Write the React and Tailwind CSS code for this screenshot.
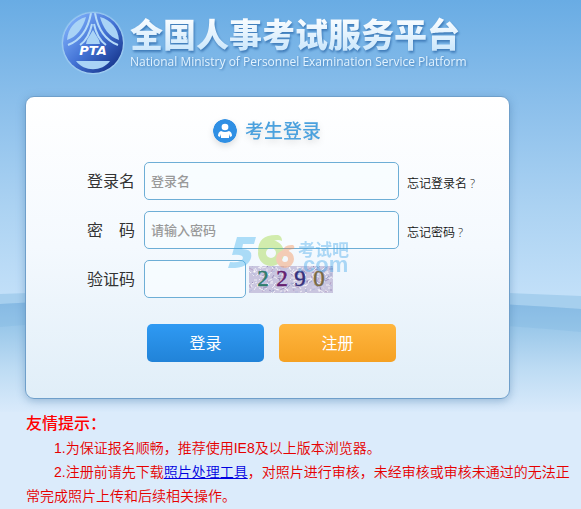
import { useState } from "react";

const Backdrop = () => (
  <svg
    className="absolute inset-x-0 top-0 -z-10 h-[412px] w-full"
    viewBox="0 0 581 412"
    preserveAspectRatio="none"
    aria-hidden="true"
  >
    <defs>
      <linearGradient id="sky" x1="0" y1="0" x2="0" y2="1">
        <stop offset="0" stopColor="#69ace4" />
        <stop offset="0.25" stopColor="#8bbfeb" />
        <stop offset="0.5" stopColor="#abd2f2" />
        <stop offset="0.71" stopColor="#c1dff8" />
        <stop offset="1" stopColor="#c1dff8" />
      </linearGradient>
      <linearGradient id="hill" gradientUnits="userSpaceOnUse" x1="0" y1="300" x2="0" y2="412">
        <stop offset="0" stopColor="#8abce5" />
        <stop offset="0.25" stopColor="#9bc8ea" />
        <stop offset="0.6" stopColor="#bcdbf3" />
        <stop offset="1" stopColor="#d9eafb" />
      </linearGradient>
    </defs>
    <rect width="581" height="412" fill="url(#sky)" />
    <path d="M0 294 Q290 282 581 296 V412 H0Z" fill="#a6cfee" />
    <path d="M0 304 Q270 288 581 309 V412 H0Z" fill="url(#hill)" />
    <path d="M0 327 Q260 303 581 332 V309 Q270 288 0 304Z" fill="#7fb5e1" opacity="0.3" />
  </svg>
);

const Logo = () => (
  <svg className="size-16 shrink-0" viewBox="0 0 64 64" role="img" aria-label="PTA">
    <defs>
      <linearGradient id="disc" x1="0" y1="0" x2="1" y2="1">
        <stop offset="0.1" stopColor="#7fb0fa" />
        <stop offset="0.5" stopColor="#4474d6" />
        <stop offset="0.9" stopColor="#16358c" />
      </linearGradient>
      <radialGradient id="halo">
        <stop offset="0.9" stopColor="#c3e3fb" />
        <stop offset="1" stopColor="#c3e3fb" stopOpacity="0" />
      </radialGradient>
      <clipPath id="rim">
        <circle cx="32" cy="32" r="30" />
      </clipPath>
    </defs>
    <circle cx="32" cy="32" r="32" fill="url(#halo)" />
    <circle cx="32" cy="32" r="30" fill="url(#disc)" />
    <g fill="#a9d3f6" clipPath="url(#rim)">
      {/* sky on both sides of the peak */}
      <path d="M25 6 C14 9 7 17 6 29 C16 26 22 17 25 6Z" />
      <path d="M39 6 C50 9 57 17 58 29 C48 26 42 17 39 6Z" />
      <path d="M32 19 L38 29 L39 33 H25 L26 29Z" />
      <path d="M15 50 H49 C41 61 23 61 15 50Z" />
    </g>
    <g fill="none" stroke="#b4daf8" strokeWidth="2" clipPath="url(#rim)">
      <path d="M30 2 C27 19 20 29 7 34 M34 2 C37 19 44 29 57 34" />
      <path d="M31 13 C29 23 26 29 19 34 M33 13 C35 23 38 29 45 34" />
    </g>
    <text
      x="32"
      y="44"
      textAnchor="middle"
      fill="#fff"
      fontFamily="DejaVu Sans, sans-serif"
      fontWeight="bold"
      fontStyle="italic"
      fontSize="13"
    >
      PTA
    </text>
  </svg>
);

const UserBadge = () => (
  <svg className="size-6 rounded-full drop-shadow-md" viewBox="0 0 24 24" aria-hidden="true">
    <circle cx="12" cy="12" r="12" fill="#2f8fe4" />
    <ellipse cx="12" cy="8" rx="3.4" ry="3.2" fill="#fff" />
    <path
      d="M8 12 Q12 14 16 12 Q19 13 19 17 L17 18 L16 15 V19 H8 V15 L7 18 L5 17 Q5 13 8 12Z"
      fill="#fff"
    />
  </svg>
);

const digits = [
  { char: "2", x: 14, color: "#2f7d6c" },
  { char: "2", x: 33, color: "#64206f" },
  { char: "9", x: 51, color: "#35307c" },
  { char: "0", x: 70, color: "#79693f" },
];

const tints = ["#ffffff", "#8d7fb0", "#aeb4dc", "#b195bd", "#dcd8ee", "#8f9cc4"];

// short strokes scattered over the captcha
const specks = Array.from({ length: 260 }, (_, i) => ({
  x: (i * 37 + ((i * i) % 11)) % 84,
  y: (i * 17 + ((i * i) % 7)) % 27,
  dx: ((i * 5) % 9) - 4,
  dy: ((i * 3) % 7) - 3,
  color: tints[(i * i + i) % 5 === 0 ? 0 : i % 6],
}));

const Captcha = () => (
  <svg className="h-[27px] w-[84px]" viewBox="0 0 84 27" role="img" aria-label="2290">
    <rect width="84" height="27" fill="#c9c5df" />
    {specks.map((s, i) => (
      <path key={i} d={`M${s.x} ${s.y}l${s.dx} ${s.dy}`} stroke={s.color} opacity="0.7" />
    ))}
    {digits.map((d) => (
      <text
        key={d.x}
        x={d.x}
        y="20"
        textAnchor="middle"
        fill={d.color}
        stroke={d.color}
        strokeWidth="0.5"
        fontFamily="Liberation Serif, serif"
        fontSize="23"
      >
        {d.char}
      </text>
    ))}
  </svg>
);

const Watermark = () => (
  <svg
    className="pointer-events-none absolute top-[134px] left-[202px] h-[48px] w-[134px] opacity-40"
    viewBox="0 0 134 48"
    aria-hidden="true"
  >
    <path
      d="M9 6 H28 L26 13 H15 L14 18 Q25 18 23 27 Q20 38 0 37 L2 31 Q14 32 15 27 Q15 23 4 24Z"
      fill="#3fb0ee"
    />
    <circle cx="43" cy="22" r="9" fill="none" stroke="#9bd534" strokeWidth="8" />
    <path d="M30 20 Q30 3 50 4 Q54 5 54 10 Q48 7 42 13Z" fill="#9bd534" />
    <circle cx="57" cy="28" r="6" fill="none" stroke="#f58a4b" strokeWidth="6" />
    <path d="M54 21 Q56 13 65 14 Q67 15 66 18 Q61 18 59 22Z" fill="#f58a4b" />
    <text x="70" y="25" fontSize="17" fontWeight="bold" fontFamily="Noto Sans CJK SC, sans-serif" fill="#3fa5ea">
      考试吧
    </text>
    <text x="69" y="41" fontSize="22" fontWeight="bold" fontFamily="Liberation Sans, sans-serif" fill="#3fa5ea">
      .com
    </text>
  </svg>
);

const inputStyle =
  "h-[38px] min-w-0 rounded-[5px] border border-[#6daed6] bg-[#f8fcff]/80 px-1.5 text-[13px] font-medium text-gray-700 placeholder:text-[#999] outline-none";

const Field = ({ id, label, children }) => (
  <div className="flex items-center">
    <label htmlFor={id} className="w-[57px] shrink-0 text-base whitespace-pre text-[#333]">
      {label}
    </label>
    {children}
  </div>
);

const LoginCard = () => {
  const [form, setForm] = useState({ name: "", password: "", code: "" });
  const update = (e) => setForm({ ...form, [e.target.id]: e.target.value });

  return (
    <form
      className="relative w-full max-w-[485px] rounded-[9px] border border-[#6f9fca] bg-linear-to-b from-white via-[#f4f9fe] to-[#e0eef8] px-[61px] pt-5 pb-9 shadow-[0_2px_8px_rgba(60,110,160,0.4)]"
      onSubmit={(e) => e.preventDefault()}
    >
      <h2 className="flex h-7 items-center gap-2 pl-[126px] text-[19px] font-medium text-[#4ba1de]">
        <UserBadge />
        <span className="whitespace-nowrap drop-shadow-md">考生登录</span>
      </h2>

      <div className="-mr-12 mt-[17px] flex flex-col gap-[11px]">
        <Field id="name" label="登录名">
          <input
            id="name"
            type="text"
            placeholder="登录名"
            value={form.name}
            onChange={update}
            className={`${inputStyle} w-[255px]`}
          />
          <a href="#name" className="ml-2 pt-1.5 text-xs font-[350] whitespace-nowrap text-[#111]">
            忘记登录名 ?
          </a>
        </Field>
        <Field id="password" label="密　码">
          <input
            id="password"
            type="password"
            placeholder="请输入密码"
            value={form.password}
            onChange={update}
            className={`${inputStyle} w-[255px]`}
          />
          <a href="#password" className="ml-2 pt-1.5 text-xs font-[350] whitespace-nowrap text-[#111]">
            忘记密码 ?
          </a>
        </Field>
        <Field id="code" label="验证码">
          <input id="code" type="text" value={form.code} onChange={update} className={`${inputStyle} mr-[3px] w-[102px]`} />
          <Captcha />
        </Field>
      </div>

      <div className="-mr-12 mt-[26px] flex gap-[15px] pl-[60px] text-base text-white">
        <button type="submit" className="h-[38px] w-[117px] rounded-[5px] bg-linear-to-b from-[#2f9af3] to-[#2183d8]">
          登录
        </button>
        <button type="button" className="h-[38px] w-[117px] rounded-[5px] bg-linear-to-b from-[#ffb63e] to-[#f5a122]">
          注册
        </button>
      </div>
      <Watermark />
    </form>
  );
};

const App = () => {
  return (
    <div className="relative isolate min-h-screen bg-[#dbebfb] font-['Open_Sans','Noto_Sans_CJK_SC',sans-serif]">
      <Backdrop />

      <header className="flex h-24 items-start gap-[5px] pt-[11px] pl-[61px]">
        <Logo />
        <div className="pt-1 whitespace-nowrap">
          <h1 className="bg-linear-to-b from-white to-[#c5e4fb] bg-clip-text text-[33px] leading-10 font-black text-transparent drop-shadow-[1px_2px_1px_rgba(40,100,165,0.7)]">
            全国人事考试服务平台
          </h1>
          <p className="text-xs leading-[14px] text-[#e2f3ff] drop-shadow-[1px_1px_1px_rgba(40,100,165,0.7)]">
            National Ministry of Personnel Examination Service Platform
          </p>
        </div>
      </header>

      <main className="pr-2 pl-[25px]">
        <LoginCard />

        <section className="mt-[13px] pl-px font-['Liberation_Sans','Noto_Sans_CJK_SC',sans-serif] text-sm leading-6 font-[350] text-[#e60000]">
          <h3 className="text-base leading-6 font-medium text-[#f00]">友情提示：</h3>
          <p className="indent-7">1.为保证报名顺畅，推荐使用IE8及以上版本浏览器。</p>
          <p className="indent-7">
            2.注册前请先下载
            <a href="#photo" className="text-[#0000e0] underline">
              照片处理工具
            </a>
            ，对照片进行审核，未经审核或审核未通过的无法正常完成照片上传和后续相关操作。
          </p>
        </section>
      </main>
    </div>
  );
};

export default App;
